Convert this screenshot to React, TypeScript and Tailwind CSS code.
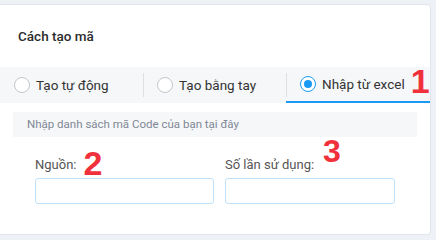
import React from "react";

function Radio({ checked }: { checked?: boolean }) {
  return checked ? (
    <span className="w-[16px] h-[16px] rounded-full border border-[#1a9af5] flex items-center justify-center bg-white shrink-0">
      <span className="w-[8px] h-[8px] rounded-full bg-[#1a9af5]" />
    </span>
  ) : (
    <span className="w-[16px] h-[16px] rounded-full border border-[#c2c6cd] bg-white shrink-0" />
  );
}

export default function App() {
  return (
    <div
      className="w-[436px] h-[240px] bg-[#eef1f5] pt-[4px] pr-[5px] pb-[5px]"
      style={{ fontFamily: "Roboto, 'Noto Sans', sans-serif" }}
    >
      <div className="h-[231px] bg-white border border-l-0 border-[#e1e6ec] rounded-r-[4px] flex flex-col">
        <div className="pt-[21px] pl-[18px] text-[13.5px] leading-[20px] font-medium text-[#2b2b2b]">
          Cách tạo mã
        </div>
        <div className="mt-[21px] h-[36px] bg-[#f6f7f9] flex">
          <div className="w-[143px] shrink-0 flex items-center pl-[14px] gap-[6px] text-[13.5px] text-[#333] whitespace-nowrap">
            <Radio />
            <span>Tạo tự động</span>
          </div>
          <div className="w-[143px] shrink-0 flex items-center pl-[14px] gap-[6px] text-[13.5px] text-[#333] relative whitespace-nowrap">
            <span className="absolute left-0 top-[6px] h-[24px] w-px bg-[#dcdfe4]" />
            <Radio />
            <span>Tạo bằng tay</span>
          </div>
          <div className="flex-1 flex items-center pl-[14px] gap-[6px] text-[13.5px] text-[#333] relative border-b-2 border-[#1a9af5] whitespace-nowrap">
            <span className="absolute left-0 top-[6px] h-[24px] w-px bg-[#dcdfe4]" />
            <Radio checked />
            <span>Nhập từ excel</span>
            <span
              className="ml-0 text-[34px] font-bold text-[#f0313b] leading-none relative top-[-3px]"
              style={{ fontFamily: "'Liberation Sans', Arial, sans-serif" }}
            >
              1
            </span>
          </div>
        </div>
        <div className="mt-[9px] mx-[13px] h-[25px] bg-[#f6f7f9] pl-[14px] flex items-center text-[11.5px] text-[#7f8896] whitespace-nowrap">
          Nhập danh sách mã Code của bạn tại đây
        </div>
        <div className="flex pl-[35px] gap-[11px] mt-[4px]">
          <div className="w-[179px] flex flex-col">
            <div className="h-[36px] flex items-end">
              <span className="text-[13px] leading-[20px] text-[#555] mb-[2px]">Nguồn:</span>
              <span
                className="ml-[7px] text-[34px] font-bold text-[#f0313b] leading-none relative top-[3px]"
                style={{ fontFamily: "'Liberation Sans', Arial, sans-serif" }}
              >
                2
              </span>
            </div>
            <div className="mt-[1px] h-[26px] border border-[#bfe1fa] rounded-[3px]" />
          </div>
          <div className="w-[170px] flex flex-col">
            <div className="h-[36px] flex items-end">
              <span className="text-[13px] leading-[20px] text-[#555] mb-[2px]">Số lần sử dụng:</span>
              <span
                className="ml-[9px] text-[32px] font-bold text-[#f0313b] leading-none relative top-[-10px]"
                style={{ fontFamily: "'Liberation Sans', Arial, sans-serif" }}
              >
                3
              </span>
            </div>
            <div className="mt-[1px] h-[26px] border border-[#bfe1fa] rounded-[3px]" />
          </div>
        </div>
      </div>
    </div>
  );
}
